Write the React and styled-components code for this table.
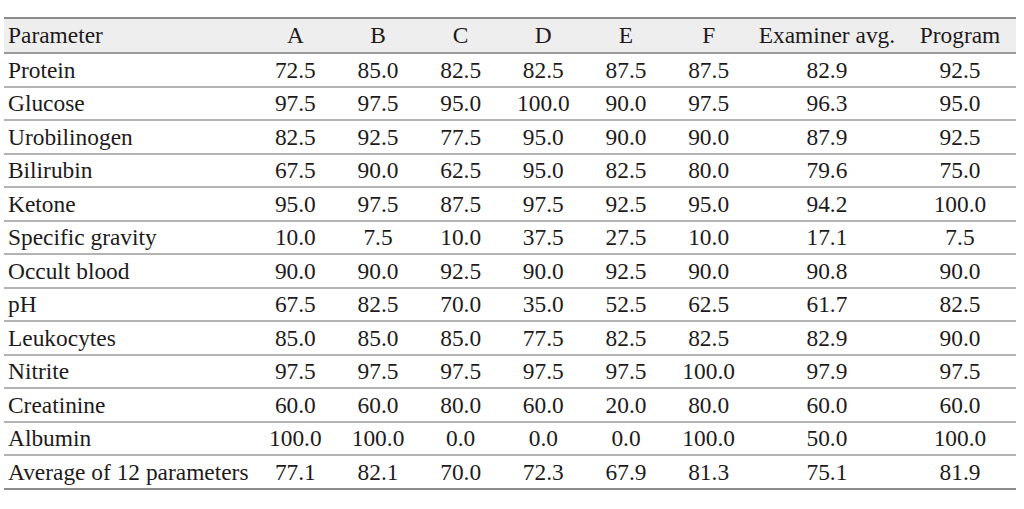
import React from "react";
import styled, { createGlobalStyle } from "styled-components";

const GlobalStyle = createGlobalStyle`
  body {
    margin: 0;
    background: #ffffff;
    font-family: "Liberation Serif", "Times New Roman", serif;
  }
`;

const Page = styled.div`
  padding: 17px 8px 0 4px;
`;

const Table = styled.table`
  width: 1012px;
  border-collapse: collapse;
  table-layout: fixed;
  color: #1e1a1b;
  font-size: 23.4px;
  border-top: 2px solid #8c8c8c;
  border-bottom: 2px solid #8c8c8c;
`;

const HeadRow = styled.tr`
  height: 35px;
  background: #eeeeee;
  border-bottom: 2px solid #9a9a9a;
`;

const Row = styled.tr`
  height: 33.5px;
  border-bottom: 2px solid #b3b3b3;

  &:last-child {
    border-bottom: none;
  }
`;

const Cell = styled.td`
  padding: 1px 4px 0;
  text-align: ${(p) => (p.$left ? "left" : "center")};
  font-weight: normal;
  white-space: nowrap;
  vertical-align: middle;
  line-height: 1;
`;

const columns = ["A", "B", "C", "D", "E", "F", "Examiner avg.", "Program"];
const widths = [250, 82.7, 82.7, 82.6, 82.7, 82.7, 82.6, 154, 112];

const rows = [
  ["Protein", "72.5", "85.0", "82.5", "82.5", "87.5", "87.5", "82.9", "92.5"],
  ["Glucose", "97.5", "97.5", "95.0", "100.0", "90.0", "97.5", "96.3", "95.0"],
  ["Urobilinogen", "82.5", "92.5", "77.5", "95.0", "90.0", "90.0", "87.9", "92.5"],
  ["Bilirubin", "67.5", "90.0", "62.5", "95.0", "82.5", "80.0", "79.6", "75.0"],
  ["Ketone", "95.0", "97.5", "87.5", "97.5", "92.5", "95.0", "94.2", "100.0"],
  ["Specific gravity", "10.0", "7.5", "10.0", "37.5", "27.5", "10.0", "17.1", "7.5"],
  ["Occult blood", "90.0", "90.0", "92.5", "90.0", "92.5", "90.0", "90.8", "90.0"],
  ["pH", "67.5", "82.5", "70.0", "35.0", "52.5", "62.5", "61.7", "82.5"],
  ["Leukocytes", "85.0", "85.0", "85.0", "77.5", "82.5", "82.5", "82.9", "90.0"],
  ["Nitrite", "97.5", "97.5", "97.5", "97.5", "97.5", "100.0", "97.9", "97.5"],
  ["Creatinine", "60.0", "60.0", "80.0", "60.0", "20.0", "80.0", "60.0", "60.0"],
  ["Albumin", "100.0", "100.0", "0.0", "0.0", "0.0", "100.0", "50.0", "100.0"],
  ["Average of 12 parameters", "77.1", "82.1", "70.0", "72.3", "67.9", "81.3", "75.1", "81.9"],
];

export default function App() {
  return (
    <Page>
      <GlobalStyle />
      <Table>
        <colgroup>
          {widths.map((w, i) => (
            <col key={i} style={{ width: w + "px" }} />
          ))}
        </colgroup>
        <thead>
          <HeadRow>
            <Cell as="th" $left>
              Parameter
            </Cell>
            {columns.map((c) => (
              <Cell as="th" key={c}>
                {c}
              </Cell>
            ))}
          </HeadRow>
        </thead>
        <tbody>
          {rows.map((r) => (
            <Row key={r[0]}>
              {r.map((v, i) => (
                <Cell key={i} $left={i === 0}>
                  {v}
                </Cell>
              ))}
            </Row>
          ))}
        </tbody>
      </Table>
    </Page>
  );
}
